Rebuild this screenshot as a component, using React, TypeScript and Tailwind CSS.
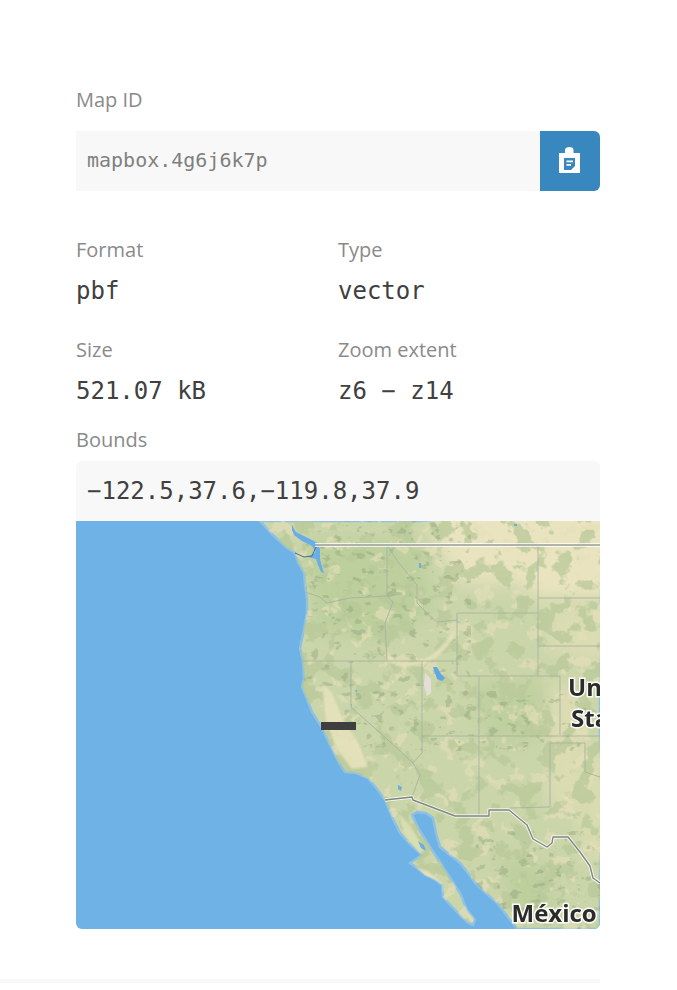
import React from 'react';

const LAND =
  'M184 0 L197 14 L210 26 L219 32 L222 41 L228 52 L229 64 L231 78 L231 91 L228 108 L224 127 L227 141 L228 157 L226 166 L231 178 L236 191 L246 207 L254 224 L262 240 L269 251 L280 252 L292 257 L301 268 L309 279 L316 296 L324 312 L335 324 L346 334 L334 342 L341 347 L349 354 L358 358 L366 364 L367 376 L378 388 L391 401 L397 404 L399 399 L391 389 L384 372 L371 352 L362 338 L354 326 L344 310 L336 294 L341 291 L350 292 L357 297 L360 312 L364 326 L374 334 L384 342 L392 352 L399 362 L410 372 L421 382 L432 396 L441 408 L524 408 L524 0 Z';

const STATE_LINES = [
  'M229 71 L244 76 L251 82 L274 77 L311 75',
  'M311 24 L311 75 L317 81 L309 102 L311 140',
  'M227 140 L381 140',
  'M275 140 L275 186 L312 219 L337 242 L344 254 L336 276',
  'M346 140 L346 232 L337 242',
  'M311 24 L322 41 L341 64 L341 82 L356 97 L361 101 L381 99',
  'M381 92 L462 92 L462 155 L381 155 L381 92',
  'M462 24 L462 92',
  'M462 77 L524 77',
  'M462 125 L524 125',
  'M462 155 L484 155 L484 214',
  'M403 155 L403 214',
  'M346 215 L524 215',
  'M403 215 L403 294',
  'M474 222 L474 286 L434 287',
  'M474 222 L509 222 L509 251 L524 256',
];

const BORDER =
  'M309 279 L336 276 L337 279 L379 295 L413 295 L413 289 L433 289 L451 304 L457 318 L471 326 L476 322 L477 316 L492 316 L504 331 L514 345 L517 357 L524 362';

function TerrainMap() {
  return (
    <svg viewBox="0 0 524 408" className="block w-[524px] h-[408px]">
      <defs>
        <clipPath id="land">
          <path d={LAND} />
        </clipPath>
        <filter id="greenNoise" x="0" y="0" width="100%" height="100%" colorInterpolationFilters="sRGB">
          <feTurbulence type="fractalNoise" baseFrequency="0.05" numOctaves="4" seed="7" />
          <feColorMatrix values="0 0 0 0 0.72  0 0 0 0 0.79  0 0 0 0 0.60  1 0 0 0 0" />
          <feComponentTransfer>
            <feFuncA type="linear" slope="14" intercept="-7.6" />
          </feComponentTransfer>
          <feGaussianBlur stdDeviation="0.7" />
          <feComposite in2="SourceAlpha" operator="in" />
        </filter>
        <filter id="tanNoise" x="0" y="0" width="100%" height="100%" colorInterpolationFilters="sRGB">
          <feTurbulence type="fractalNoise" baseFrequency="0.06" numOctaves="3" seed="21" />
          <feColorMatrix values="0 0 0 0 0.90  0 0 0 0 0.88  0 0 0 0 0.73  1 0 0 0 0" />
          <feComponentTransfer>
            <feFuncA type="linear" slope="14" intercept="-8.3" />
          </feComponentTransfer>
          <feGaussianBlur stdDeviation="0.7" />
          <feComposite in2="SourceAlpha" operator="in" />
        </filter>
        <filter id="ridgeNoise" x="0" y="0" width="100%" height="100%" colorInterpolationFilters="sRGB">
          <feTurbulence type="fractalNoise" baseFrequency="0.09 0.13" numOctaves="3" seed="4" />
          <feColorMatrix values="0 0 0 0 0.55  0 0 0 0 0.63  0 0 0 0 0.47  1 0 0 0 0" />
          <feComponentTransfer>
            <feFuncA type="linear" slope="12" intercept="-7.6" />
          </feComponentTransfer>
          <feGaussianBlur stdDeviation="0.5" />
          <feComposite in2="SourceAlpha" operator="in" />
        </filter>
        <filter id="soft">
          <feGaussianBlur stdDeviation="9" />
        </filter>
        <filter id="slight">
          <feGaussianBlur stdDeviation="1.2" />
        </filter>
      </defs>

      <rect width="524" height="408" fill="#6fb2e5" />
      <path d={LAND} fill="#cbd5aa" stroke="#8fc1e3" strokeWidth="2.5" />

      <g clipPath="url(#land)">
        {/* big regional colour */}
        <path d="M346 -30 L560 -30 L560 78 L462 78 L440 62 L385 62 L362 28 Z" fill="#e9e4bf" filter="url(#soft)" />
        <path d="M470 80 L540 80 L540 150 L470 130 Z" fill="#dadcb2" filter="url(#soft)" />
        <path d="M470 160 L510 170 L510 300 L470 280 Z" fill="#dcdcb2" filter="url(#soft)" />
        <path d="M510 225 L540 225 L540 350 L500 330 Z" fill="#d9dbb0" filter="url(#soft)" />
        <path d="M230 20 L340 20 L360 90 L300 120 L240 110 Z" fill="#bccf9c" filter="url(#soft)" />
        <path d="M400 160 L470 160 L460 220 L410 230 Z" fill="#bfd09f" filter="url(#soft)" />
        <path d="M420 330 L470 350 L480 400 L440 390 Z" fill="#bccf9c" filter="url(#soft)" />

        <g opacity="0.6">
          <rect width="524" height="408" fill="#000" filter="url(#tanNoise)" />
        </g>
        <g opacity="0.75">
          <rect width="524" height="408" fill="#000" filter="url(#greenNoise)" />
        </g>
        <g opacity="0.4">
          <rect x="225" y="0" width="170" height="165" fill="#000" filter="url(#ridgeNoise)" />
          <rect x="260" y="170" width="250" height="60" fill="#000" filter="url(#ridgeNoise)" />
          <rect x="400" y="310" width="124" height="98" fill="#000" filter="url(#ridgeNoise)" />
        </g>

        {/* central valley and baja, paler than the rest */}
        <g filter="url(#slight)" opacity="0.85">
          <path d="M246 162 L256 172 L266 196 L280 218 L292 246 L276 248 L262 230 L250 200 Z" fill="#e8e3bd" />
          <path d="M322 292 L334 304 L348 328 L344 334 L328 312 Z" fill="#dde0b5" />
          <path d="M337 346 L352 350 L366 362 L367 372 L356 362 Z" fill="#e8e3bd" />
          <path d="M310 132 C320 150 340 142 350 140 C362 134 372 122 378 112" fill="none" stroke="#e6e2b9" strokeWidth="5" />
        </g>
      </g>

      {/* inland water and salt flat */}
      <path d="M349 152 L355 158 L355 172 L351 175 L348 165 Z" fill="#e3dfd8" />
      <path d="M357 146 L361 146 L365 153 L369 157 L366 160 L361 158 Z" fill="#5fa8e6" />
      <path d="M216 4 L220 11 L232 17 L240 21 L244 28 L244 38 L246 46 L248 52 L245 51 L242 44 L240 38 L232 36 L240 31 L236 25 L226 20 L218 14 L216 9 Z" fill="#69aee6" />
      <path d="M219 32 L228 36 L236 35 L240 26" fill="none" stroke="#4d6f8c" strokeWidth="1" />
      <path d="M343 42 L345 42 L345 47 L343 47 Z M438 3 L441 3 L441 5 L438 5 Z M279 169 L281 169 L281 172 Z M275 183 L276 183 L276 186 Z M322 264 L326 266 L325 270 L322 268 Z M342 320 L348 324 L350 330 L345 327 Z" fill="#69aee6" />

      {/* admin lines */}
      <g fill="none" strokeLinejoin="round">
        {STATE_LINES.map((d) => (
          <path key={d} d={d} stroke="#a8b3a2" strokeWidth="0.9" />
        ))}
        <path d="M239 24 L524 24" stroke="#fff" strokeWidth="4" opacity="0.75" />
        <path d="M239 24 L524 24" stroke="#989c94" strokeWidth="1.6" />
        <path d={BORDER} stroke="#fff" strokeWidth="3.4" opacity="0.75" />
        <path d={BORDER} stroke="#80857f" strokeWidth="1.4" />
      </g>

      {/* selected bounds */}
      <rect x="245" y="201" width="35" height="8" fill="#3f3f3f" />

      <g
        fontFamily="'Open Sans', sans-serif"
        fontWeight="700"
        fontSize="24"
        fill="#2b2b2b"
        stroke="#fff"
        strokeWidth="3"
        strokeOpacity="0.9"
        paintOrder="stroke"
      >
        <text x="492" y="175">Un</text>
        <text x="495" y="206">Sta</text>
        <text x="435.5" y="401">México</text>
      </g>
    </svg>
  );
}

function Stat({ label, value }: { label: string; value: string }) {
  return (
    <div>
      <div className="text-[20px] leading-[30px] text-[#8a8a8a]">{label}</div>
      <div className="mt-[6px] font-['DejaVu_Sans_Mono',monospace] text-[24px] leading-[40px] text-[#404040]">
        {value}
      </div>
    </div>
  );
}

export default function App() {
  return (
    <div className="w-[677px] h-[990px] overflow-hidden bg-white font-['Open_Sans',sans-serif]">
      <div className="w-[600px] pl-[76px] pt-[85px]">
        <div className="text-[20px] leading-[30px] text-[#8a8a8a]">Map ID</div>
        <div className="mt-4 flex h-[60px]">
          <div className="flex-1 bg-[#f8f8f8] pl-[11px] font-['DejaVu_Sans_Mono',monospace] text-[20px] leading-[58px] text-[#808080]">
            mapbox.4g6j6k7p
          </div>
          <button className="flex w-[60px] items-center justify-center rounded-r-[6px] bg-[#3887be] pb-[2px] pr-[1px]">
            <svg viewBox="0 0 21 26" className="h-[26px] w-[21px]">
              <path
                fill="#fff"
                fillRule="evenodd"
                d="M6 6 L6 3 C6 1 8 0 10.5 0 C13 0 14.5 1 14.5 3 L14.5 6 L21 6 L21 26 L0 26 L0 6 Z M5 11 L5 23 L12 23 L16 19 L16 11 Z"
              />
              <path fill="#fff" d="M7.5 13.5 H14 V15.2 H7.5 Z M7.5 17 H12 V18.7 H7.5 Z" />
            </svg>
          </button>
        </div>

        <div className="mt-11 grid grid-cols-2 gap-y-6">
          <Stat label="Format" value="pbf" />
          <Stat label="Type" value="vector" />
          <Stat label="Size" value="521.07 kB" />
          <Stat label="Zoom extent" value="z6 − z14" />
        </div>

        <div className="mt-[14px] text-[20px] leading-[30px] text-[#8a8a8a]">Bounds</div>
        <div className="mt-[6px] h-[60px] rounded-t-[6px] bg-[#f8f8f8] pl-[11px] font-['DejaVu_Sans_Mono',monospace] text-[24px] leading-[60px] text-[#404040]">
          −122.5,37.6,−119.8,37.9
        </div>
        <div className="h-[408px] overflow-hidden rounded-b-[6px]">
          <TerrainMap />
        </div>
      </div>
      <div className="mt-[50px] h-1 w-[600px] bg-[#f8f8f8]" />
    </div>
  );
}
